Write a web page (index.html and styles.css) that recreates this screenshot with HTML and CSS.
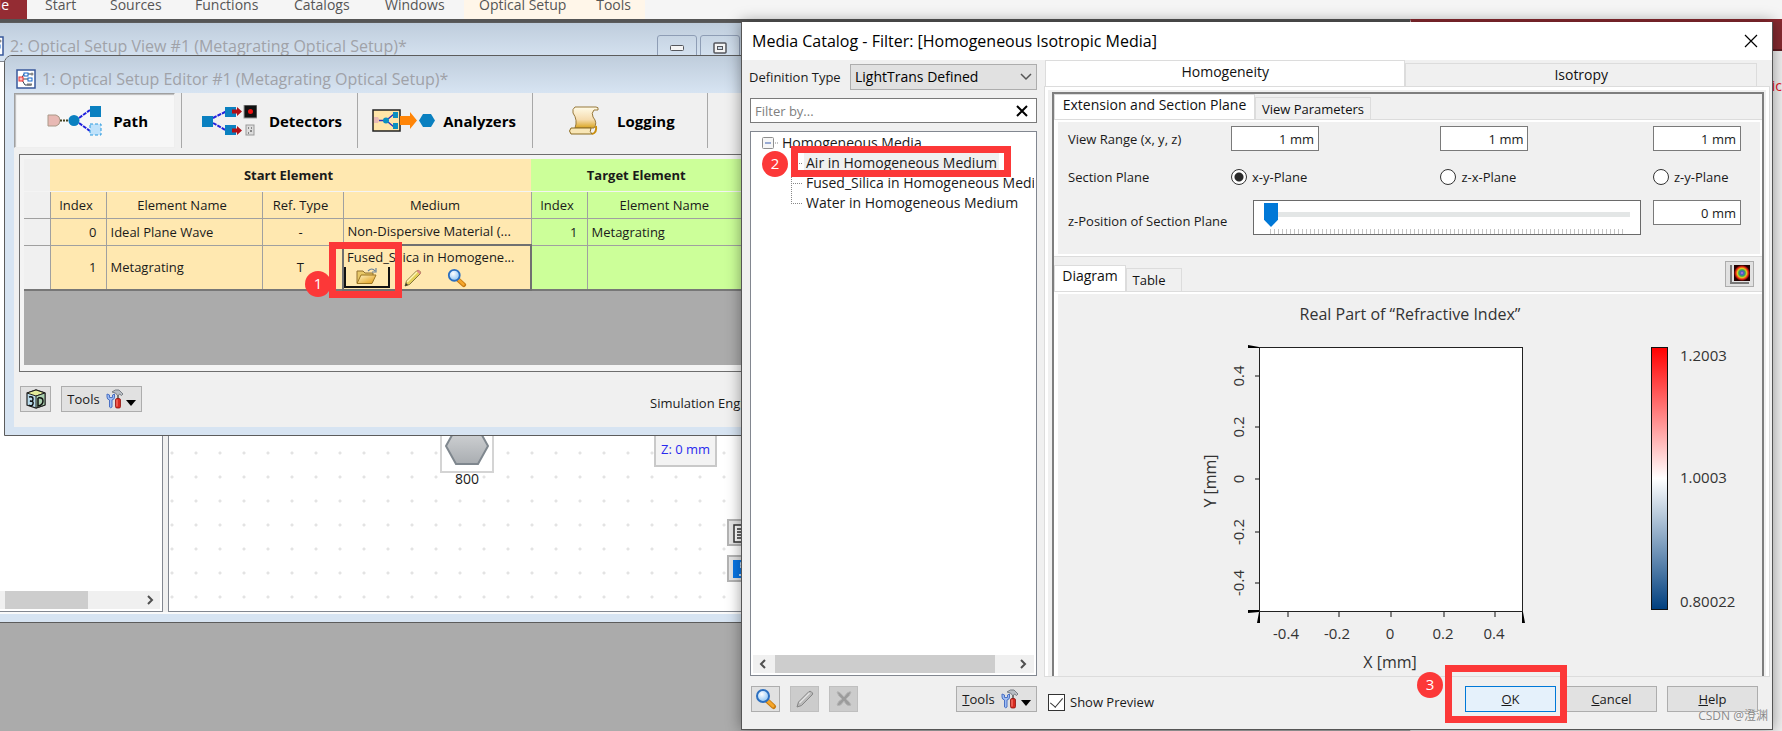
FILE: index.html
```
<!DOCTYPE html>
<html lang="en">
<head>
<meta charset="utf-8">
<title>Media Catalog</title>
<link rel="stylesheet" href="styles.css">
</head>
<body>
<svg class="defs" aria-hidden="true">
  <defs>
    <linearGradient id="gold" x1="0" y1="0" x2="1" y2="1"><stop offset="0" stop-color="#fff3c4"/><stop offset="1" stop-color="#e09a10"/></linearGradient>
    <linearGradient id="paper" x1="0" y1="0" x2="0" y2="1"><stop offset="0" stop-color="#fffbe8"/><stop offset=".6" stop-color="#f6dcae"/><stop offset="1" stop-color="#d9a520"/></linearGradient>
    <linearGradient id="steel" x1="0" y1="0" x2="0" y2="1"><stop offset="0" stop-color="#d4d6d8"/><stop offset="1" stop-color="#a9adb1"/></linearGradient>
    <linearGradient id="scale" x1="0" y1="0" x2="0" y2="1"><stop offset="0" stop-color="#f00"/><stop offset=".5" stop-color="#fff"/><stop offset="1" stop-color="#003f7f"/></linearGradient>
    <radialGradient id="lens" cx=".4" cy=".35"><stop offset="0" stop-color="#fff"/><stop offset="1" stop-color="#a6d2f7"/></radialGradient>
    <radialGradient id="spot"><stop offset="0" stop-color="#c9c"/><stop offset=".2" stop-color="#55c"/><stop offset=".4" stop-color="#3a5"/><stop offset=".58" stop-color="#dc2"/><stop offset=".78" stop-color="#e21"/><stop offset="1" stop-color="#200"/></radialGradient>
    <symbol id="i-magnify" viewBox="0 0 22 22"><path d="M12.5 13 18.500 18.500" stroke="#c77a10" stroke-width="5" stroke-linecap="round"/><path d="M13 13.200 18 18" stroke="#f5a62a" stroke-width="3" stroke-linecap="round"/><circle cx="8" cy="8" r="6" fill="url(#lens)" stroke="#2b6fc0" stroke-width="2"/></symbol>
    <symbol id="i-tools" viewBox="0 0 18 20"><path d="M1 5v3q0 2.500 2.500 3v7q1 1.500 2.500 0v-7Q8.500 10.500 8.500 8V5L6.500 6v2.500h-3V6Z" fill="#9dbcf2" stroke="#4a70c4"/><path d="M6 3q3-3 7-2l4 4-1.500 1.500L13.500 5 12 7 9.500 4Z" fill="#b9bec4" stroke="#666c74" stroke-width=".8"/><path d="M11 6h2v5h-2Z" fill="#777"/><rect x="9.500" y="9.500" width="5" height="9.500" rx="1.500" fill="#d92a20" stroke="#8d120c" stroke-width=".8"/><path d="M11 10.500v7" stroke="#ff8d80"/></symbol>
    <symbol id="i-pencil" viewBox="0 0 18 18"><path d="M1 17 2.500 12 13 1.500q2-1 3.500 1.500Q17 4 16 5L5.500 15.500Z" fill="#e3cf5a" stroke="#776a30" stroke-width=".9"/><path d="m3 13 10-10" stroke="#fff6b5" stroke-width="1.500"/><path d="m12.500 2 3.500 3.500 1-1.500Q16 1 14 1Z" fill="#d88"/><path d="m1 17 1-3 2 2Z" fill="#333"/></symbol>
    <symbol id="i-pencil-off" viewBox="0 0 18 18"><path d="M1 17 2.500 12 13 1.500q2-1 3.500 1.500Q17 4 16 5L5.500 15.500Z" fill="#b9b9b9" stroke="#858585"/><path d="m3.500 13 10-10" stroke="#e2e2e2" stroke-width="1.500"/></symbol>
    <symbol id="i-editor" viewBox="0 0 20 20"><rect x="1" y="1" width="18" height="18" fill="#fff" stroke="#38589a" stroke-width="1.500"/><path d="M5 10 8 5h8M6 10h8M6 11l3 5h6" fill="none" stroke="#345"/><rect x="3" y="8" width="4" height="4" fill="#fbb" stroke="#e33"/><rect x="8" y="4" width="4" height="3" fill="#fff" stroke="#16c"/><rect x="12" y="9" width="4" height="3" fill="#fff" stroke="#16c"/><circle cx="16" cy="5" r="1.500" fill="#888"/><path d="M11 14.500h5v2h-5Z" fill="#777"/></symbol>
  </defs>
</svg>

<nav class="menubar">
  <a class="file" href="#">File</a>
  <a href="#" class="m-start">Start</a>
  <a href="#" class="m-sources">Sources</a>
  <a href="#" class="m-functions">Functions</a>
  <a href="#" class="m-catalogs">Catalogs</a>
  <a href="#" class="m-windows">Windows</a>
  <div class="context"><a href="#">Optical Setup</a><a href="#">Tools</a></div>
</nav>

<div class="workspace">
  <div class="mdi"></div>
  <aside class="dock"><div class="dock-head"></div><span class="dock-text">ic</span></aside>

  <section class="window view-window">
    <header class="caption">
      <svg class="cap-icon" width="20" height="20"><use href="#i-editor"/></svg>
      <h2>2: Optical Setup View #1 (Metagrating Optical Setup)*</h2>
      <span class="cap-buttons">
        <button aria-label="Minimize"><svg width="14" height="8"><rect x=".5" y="1.500" width="13" height="5" rx="1" fill="#f4f4f4" stroke="#54565c"/></svg></button>
        <button aria-label="Restore"><svg width="14" height="12"><rect x="1" y="1" width="12" height="10" rx="1" fill="#f4f4f4" stroke="#54565c" stroke-width="1.500"/><rect x="4.500" y="4.500" width="5" height="3" fill="#cfdbe8" stroke="#54565c"/></svg></button>
      </span>
    </header>
    <div class="view-body">
      <div class="side-panel"><div class="scrollbar"><span class="side-thumb"></span><svg width="8" height="10"><path d="m2 1 4 4-4 4" fill="none" stroke="#505050" stroke-width="2"/></svg></div></div>
      <div class="canvas">
        <div class="node"><div class="node-box"><svg width="44" height="40"><path d="M11 2h22l10 18-10 18H11L1 20Z" fill="url(#steel)" stroke="#7f878e" stroke-width="2"/></svg></div><span>800</span></div>
        <div class="z-box">Z: 0 mm</div>
        <button class="tool-a" aria-label="Details"><svg width="18" height="20"><path d="M1 1h15v17H1ZM4 5h9M4 8h9M4 11h9M4 14h9" fill="#fff" stroke="#333" stroke-width="1.500"/></svg></button>
        <button class="tool-b" aria-label="Info"><svg width="18" height="18"><path d="M0 0h18v18H0Z" fill="#0a78e8"/><path d="M7 7h3v8M6 15h6M8 3h2v2H8Z" fill="none" stroke="#fff" stroke-width="1.500"/></svg></button>
      </div>
    </div>
  </section>

  <section class="window editor-window">
    <header class="caption">
      <svg class="cap-icon" width="20" height="20"><use href="#i-editor"/></svg>
      <h2>1: Optical Setup Editor #1 (Metagrating Optical Setup)*</h2>
    </header>
    <div class="editor-body">
      <div class="modes">
        <button class="mode active"><svg width="56" height="32" viewBox="0 0 56 32"><path d="M1 10h8q4 1 4 5.500T9 21H1Z" fill="#e8b9b4" stroke="#a98"/><path d="M13 15.500h8" stroke="#442" stroke-width="2" stroke-dasharray="2 1"/><path d="m32 13 11-8M32 18l11 8" stroke="#22d" stroke-width="2" stroke-dasharray="4 1"/><circle cx="27" cy="15.500" r="5.500" fill="#0a80c0"/><rect x="43" y="1" width="11" height="11" fill="#0a80c0"/><rect x="43" y="19" width="11" height="11" fill="#bfe2fb" stroke="#2a9ade" stroke-dasharray="3 2"/></svg><span>Path</span></button>
        <button class="mode"><svg width="56" height="32" viewBox="0 0 56 32"><path d="m12 13 14-7M12 18l14 8" stroke="#22d" stroke-width="2" stroke-dasharray="4 1"/><rect x="1" y="11" width="11" height="11" fill="#0a80c0"/><rect x="24" y="2" width="11" height="10" fill="#0a80c0"/><rect x="24" y="20" width="11" height="10" fill="#0a80c0"/><path d="M31 4.500h5V2l5 4.500-5 4.500V8.500h-5ZM31 23.500h5V21l5 4.500-5 4.500v-2.500h-5Z" fill="#b01018"/><rect x="43" y="0" width="13" height="13" fill="#111" stroke="#999"/><circle cx="49.500" cy="6.500" r="2.500" fill="#e11"/><rect x="45" y="20" width="8" height="10" fill="#ddd" stroke="#999"/><path d="M47 23h1M50 23h1M49 26h2M47 28h1" stroke="#333"/></svg><span>Detectors</span></button>
        <button class="mode"><svg width="63" height="32" viewBox="0 0 63 32"><rect x="1" y="5" width="27" height="21" fill="#ffe5a8" stroke="#222" stroke-width="1.500"/><path d="M2 12h4q2 3 0 6H2Z" fill="#e8b9b4"/><path d="M7 15.500h5M16 14l6-5M16 17l6 5" stroke="#33b" stroke-width="1.500"/><circle cx="14" cy="15.500" r="3" fill="#0a90c0"/><rect x="21" y="7" width="5" height="6" fill="#0a90c0"/><rect x="21" y="18" width="5" height="6" fill="#0a90c0"/><path d="M28 11h10V7l7 8.500-7 8.500v-4H28Z" fill="#ff8508"/><path d="M51 9h8l4 6.500-4 6.500h-8l-4-6.500Z" fill="#0a80c0"/></svg><span>Analyzers</span></button>
        <button class="mode"><svg width="32" height="32" viewBox="0 0 32 32"><path d="M7 2q-3 2-2 6 5 7 2 15h19q4-5-1-11-2-4 1-7h4q1-3-2-3Z" fill="url(#paper)" stroke="#97783a"/><path d="M3 23h20q-2 4 1 6H3q-3-3 0-6Z" fill="#f8e6b6" stroke="#8a6a20"/><path d="M24 29q5-1 4-8" fill="none" stroke="#c98d0b" stroke-width="2"/></svg><span>Logging</span></button>
      </div>
      <div class="grid-frame">
        <div class="grid-area">
        <table class="elements">
          <colgroup><col class="c-head"><col class="c-index"><col class="c-name"><col class="c-type"><col class="c-medium"><col class="c-index"><col></colgroup>
          <thead>
            <tr class="group"><th class="head"></th><th colspan="4">Start Element</th><th colspan="2" class="green">Target Element</th></tr>
            <tr><th class="head"></th><th>Index</th><th>Element Name</th><th>Ref. Type</th><th>Medium</th><th class="green">Index</th><th class="green">Element Name</th></tr>
          </thead>
          <tbody>
            <tr><td class="head"></td><td class="num">0</td><td>Ideal Plane Wave</td><td class="mid">-</td><td>Non-Dispersive Material (...</td><td class="green num">1</td><td class="green">Metagrating</td></tr>
            <tr class="tall"><td class="head"></td><td class="num">1</td><td>Metagrating</td><td class="mid">T</td>
              <td class="picked"><div class="medium"><span>Fused_Silica in Homogene...</span><div class="medium-tools">
                <button class="folder" aria-label="Load"><svg width="22" height="18" viewBox="0 0 22 18"><path d="M1 16V4h6l2 2h8v3" fill="#e8c868" stroke="#927030"/><path d="M1 16.500 5 8h15l-4 8.500Z" fill="url(#gold)" stroke="#9b7420"/><path d="M12 4q4-4 7 0M20 1v4h-4" fill="none" stroke="#68819c" stroke-width="1.200"/></svg></button>
                <button aria-label="Edit"><svg width="18" height="18"><use href="#i-pencil"/></svg></button>
                <button aria-label="View"><svg width="22" height="20"><use href="#i-magnify"/></svg></button>
              </div></div></td>
              <td class="green"></td><td class="green"></td></tr>
          </tbody>
        </table>
        </div>
      </div>
      <div class="editor-foot">
        <button class="btn cube" aria-label="3D view"><svg width="22" height="20" viewBox="0 0 22 20"><path d="m2 4 9-3 9 3v12l-9 3-9-3Z" fill="#b9dcec" stroke="#222" stroke-width="1.200"/><path d="m2 4 9-3 9 3-9 3Z" fill="#e4ec9a" stroke="#222"/><path d="m11 7 9-3v12l-9 3Z" fill="#a8cfae" stroke="#222"/><path d="M4 8q4-1 4 2t-3 2q4 0 3 3t-4 1M13 9v8q5-1 5-5t-5-3" fill="none" stroke="#111" stroke-width="1.500"/></svg></button>
        <button class="btn tools"><span>Tools</span><svg width="18" height="20"><use href="#i-tools"/></svg><svg class="caret" width="10" height="6"><path d="M0 0h10L5 6Z"/></svg></button>
        <span class="engine">Simulation Engine</span>
      </div>
    </div>
  </section>

  <section class="dialog" role="dialog" aria-labelledby="dlg-title">
    <header class="dialog-head">
      <h1 id="dlg-title">Media Catalog - Filter: [Homogeneous Isotropic Media]</h1>
      <button aria-label="Close"><svg width="14" height="14"><path d="m1 1 12 12M13 1 1 13" stroke="#000" stroke-width="1.200"/></svg></button>
    </header>
    <div class="dialog-body">
      <div class="catalog">
        <div class="def-row"><label for="deftype">Definition Type</label>
          <div class="select"><select id="deftype"><option>LightTrans Defined</option></select><svg width="12" height="8"><path d="m1 1 5 5 5-5" fill="none" stroke="#555" stroke-width="1.500"/></svg></div>
        </div>
        <div class="filter"><input type="text" placeholder="Filter by..." aria-label="Filter by"><button aria-label="Clear"><svg width="12" height="12"><path d="m1 1 10 10M11 1 1 11" stroke="#000" stroke-width="2"/></svg></button></div>
        <div class="tree">
          <ul class="tree-root">
            <li><div class="tree-item"><svg width="18" height="12"><rect x=".5" y=".5" width="11" height="11" rx="1" fill="#f6f6f6" stroke="#8e8e8e"/><path d="M3 6h6" stroke="#3a5fb0"/><path d="M13 6h4" stroke="#888" stroke-dasharray="1 1"/></svg><span>Homogeneous Media</span></div>
              <ul class="tree-leaves">
                <li><span class="leaf current">Air in Homogeneous Medium</span></li>
                <li><span class="leaf">Fused_Silica in Homogeneous Medium</span></li>
                <li><span class="leaf">Water in Homogeneous Medium</span></li>
              </ul></li>
          </ul>
          <div class="scrollbar"><svg width="22" height="10"><path d="m12 1-4 4 4 4" fill="none" stroke="#505050" stroke-width="2"/></svg><span class="tree-thumb"></span><svg width="22" height="10"><path d="m9 1 4 4-4 4" fill="none" stroke="#505050" stroke-width="2"/></svg></div>
        </div>
      </div>

      <div class="preview">
        <div class="tabs main-tabs"><button class="tab active">Homogeneity</button><button class="tab">Isotropy</button></div>
        <div class="page">
          <div class="frame">
            <div class="tabs"><button class="tab active t-ext">Extension and Section Plane</button><button class="tab t-view">View Parameters</button></div>
            <div class="pane params">
              <div class="param-grid">
                <span>View Range (x, y, z)</span>
                <input type="text" value="1 mm" aria-label="x range"><input type="text" value="1 mm" aria-label="y range"><input type="text" value="1 mm" aria-label="z range">
                <span>Section Plane</span>
                <label><input type="radio" name="plane" checked>x-y-Plane</label>
                <label><input type="radio" name="plane">z-x-Plane</label>
                <label><input type="radio" name="plane">z-y-Plane</label>
              </div>
              <div class="slide-row"><label for="zpos">z-Position of Section Plane</label>
                <div class="slider"><input id="zpos" type="range" min="0" max="100" value="0"><div class="ticks"></div></div>
                <input type="text" value="0 mm" aria-label="z position"></div>
            </div>
            <div class="tabs lower-tabs"><button class="tab active t-diag">Diagram</button><button class="tab t-table">Table</button>
              <button class="btn palette" aria-label="Color view"><svg width="22" height="20"><path d="M2 1v18h18" fill="none" stroke="#777" stroke-width="2"/><rect x="5" y="1" width="16" height="16" fill="#200"/><rect x="5" y="1" width="16" height="16" fill="url(#spot)"/></svg></button></div>
            <div class="pane chart">
              <svg width="560" height="380" role="img" aria-label="Real Part of Refractive Index">
                <text x="220" y="26" text-anchor="middle" class="chart-title">Real Part of “Refractive Index”</text>
                <rect x="69.500" y="53.500" width="263" height="264" fill="#fff" stroke="#222"/>
                <path d="M65 82h4M65 133h4M65 185h4M65 238h4M65 289h4M98 318v5M149 318v5M201 318v5M254 318v5M305 318v5" stroke="#111" fill="none"/>
                <path d="M58 51 69 53v1H58ZM58 319 69 318v-2L58 316ZM67 329 69 318h1v11ZM332 318h1l2 11h-3Z"/>
                <g class="chart-text" text-anchor="middle">
                  <text x="96" y="345">-0.4</text><text x="147" y="345">-0.2</text><text x="200" y="345">0</text><text x="253" y="345">0.2</text><text x="304" y="345">0.4</text>
                  <text x="200" y="374" class="chart-title">X [mm]</text>
                  <text transform="translate(54 82) rotate(-90)">0.4</text><text transform="translate(54 133) rotate(-90)">0.2</text><text transform="translate(54 185) rotate(-90)">0</text><text transform="translate(54 238) rotate(-90)">-0.2</text><text transform="translate(54 289) rotate(-90)">-0.4</text>
                  <text transform="translate(26 187) rotate(-90)" class="chart-title">Y [mm]</text>
                </g>
                <rect x="461.500" y="53.500" width="16" height="262" fill="url(#scale)" stroke="#111"/>
                <g class="chart-text"><text x="490" y="67">1.2003</text><text x="490" y="189">1.0003</text><text x="490" y="313">0.80022</text></g>
              </svg>
            </div>
          </div>
        </div>
      </div>
    </div>
    <footer class="dialog-foot">
      <div class="foot-left">
        <button class="btn icon" aria-label="Inspect"><svg width="22" height="22"><use href="#i-magnify"/></svg></button>
        <button class="btn icon off" disabled aria-label="Edit"><svg width="18" height="18"><use href="#i-pencil-off"/></svg></button>
        <button class="btn icon off" disabled aria-label="Delete"><svg width="18" height="18"><path d="M2 2q2-1 7 5 4-6 7-5-1 4-5 7 4 3 5 6-4 2-7-4-4 6-7 4 1-4 5-6-4-3-5-7Z" fill="#9c9c9c" stroke="#b4b4b4"/></svg></button>
        <button class="btn tools end"><span><u>T</u>ools</span><svg width="18" height="20"><use href="#i-tools"/></svg><svg class="caret" width="10" height="6"><path d="M0 0h10L5 6Z"/></svg></button>
      </div>
      <label class="show"><input type="checkbox" checked>Show Preview</label>
      <div class="actions"><button class="btn ok"><u>O</u>K</button><button class="btn"><u>C</u>ancel</button><button class="btn"><u>H</u>elp</button></div>
    </footer>
  </section>
</div>

<div class="mark box-1"></div><div class="badge badge-1">1</div>
<div class="mark box-2"></div><div class="badge badge-2">2</div>
<div class="mark box-3"></div><div class="badge badge-3">3</div>
<div class="watermark">CSDN @澄渊</div>
</body>
</html>
```
FILE: styles.css
```
* { box-sizing: border-box; }
body { margin: 0; height: 100vh; display: flex; flex-direction: column; overflow: hidden; position: relative; font: 13px/18px "Open Sans", "Noto Sans", "Noto Sans CJK SC", sans-serif; color: #1a1a1a; background: #ababab; }
button, input, select { font: inherit; color: inherit; }
button { border: 0; padding: 0; background: none; }
svg { flex: none; display: block; }
h1, h2, ul { margin: 0; padding: 0; font-weight: 400; list-style: none; }
.defs { position: absolute; width: 0; height: 0; }

/* menu */
.menubar { height: 19px; flex: none; display: flex; background: #f5f5f5; overflow: hidden; font-size: 14px; line-height: 10px; }
.menubar a { color: #555; text-decoration: none; white-space: nowrap; }
.menubar .file { width: 27px; height: 19px; background: #942c33; color: #fff; display: flex; justify-content: flex-end; padding-right: 18px; }
.m-start { margin-left: 18px; width: 65px; }
.m-sources { width: 85px; }
.m-functions { width: 99px; }
.m-catalogs { width: 91px; }
.m-windows { width: 79px; }
.context { background: #fff6e9; width: 181px; display: flex; justify-content: space-between; padding: 0 14px 0 15px; }

.workspace { flex: 1; position: relative; display: flex; border-top: 3px solid #555; min-height: 0; }
.mdi { flex: 1; background: #ababab; }
.dock { width: 372px; background: #f0f0f0; border-left: 1px solid #ddd; margin-top: -3px; border-top: 3px solid #8b2930; text-align: right; }
.dock-head { height: 29px; background: #852a30; border-bottom: 2px solid #5d1b20; }
.dock-text { display: block; color: #e81123; padding-top: 26px; font-size: 14px; }

/* MDI windows */
.window { position: absolute; background: #d7e4f2; border: 1px solid #5c5c5c; display: flex; flex-direction: column; }
.caption { height: 38px; flex: none; display: flex; align-items: center; gap: 6px; background: linear-gradient(#bfcddc, #d7e4f2); }
.caption h2 { font-size: 16px; line-height: 20px; color: #a0a2a8; white-space: nowrap; }
.view-window { left: -18px; top: 0; width: 790px; height: 601px; }
.view-window .caption { padding: 8px 31px 0 1px; }
.cap-buttons { margin-left: auto; display: flex; gap: 3px; align-self: flex-end; }
.cap-buttons button { width: 40px; height: 26px; border: 1px solid #8e9db5; border-radius: 3px; display: flex; align-items: center; justify-content: center; }
.view-body { flex: 1; display: flex; gap: 5px; background: #f0f0f0; margin: 0 0 8px; border-bottom: 2px solid #fafafa; min-height: 0; }
.side-panel { width: 180px; background: #fff; border: 1px solid #828790; display: flex; flex-direction: column; justify-content: flex-end; padding: 2px; }
.scrollbar { height: 18px; flex: none; background: #f0f0f0; display: flex; align-items: center; }
.side-thumb { width: 83px; height: 18px; background: #cdcdcd; margin: 0 auto 0 19px; }
.side-panel .scrollbar { padding-right: 6px; }
.canvas { flex: 1; position: relative; background: #fff radial-gradient(circle at 3px 3px, #e3e3e3 1px, transparent 2px) 0 4px / 24px 24px; border: 1px solid #828790; }
.node { position: absolute; left: 271px; top: 345px; width: 54px; text-align: center; font-size: 14px; line-height: 12px; }
.node-box { height: 66px; border: 2px solid #d4d4d4; background: #fff; display: flex; justify-content: center; align-items: flex-end; padding-bottom: 5px; }
.z-box { position: absolute; left: 485px; top: 370px; width: 63px; height: 35px; background: #f3f3f3; border: 2px solid #c9c9c9; color: #2a2aee; line-height: 30px; text-align: center; }
.tool-a, .tool-b { position: absolute; left: 558px; width: 28px; height: 27px; padding: 3px 4px; border: 2px solid #b4b4b4; background: #e6e6e6; }
.tool-a { top: 457px; }
.tool-b { top: 493px; }

.editor-window { left: 4px; top: 33px; width: 760px; height: 381px; border-radius: 8px 0 0 0; overflow: hidden; }
.editor-window .caption { padding: 8px 0 0 11px; height: 37px; }
.editor-body { flex: 1; margin: 0 0 8px 9px; background: #f0f0f0; display: flex; flex-direction: column; }
.modes { display: flex; height: 56px; }
.mode { width: 175px; flex: none; margin-bottom: 1px; border-right: 1px solid #a8a8a8; display: flex; align-items: center; justify-content: space-between; padding: 0 15px 0 19px; font-size: 15px; font-weight: 700; color: #000; }
.mode.active { width: 161px; margin-right: 6px; border: 1px solid #a0a0a0; border-right-color: #eee; border-bottom-color: #eee; box-shadow: inset 1px 1px 1px #bbb; background: #f7f7f7; padding: 0 26px 0 32px; }
.mode.active + .mode { width: 177px; border-left: 1px solid #a8a8a8; }
.mode:nth-child(3) { padding: 0 16px 0 14px; }
.mode:nth-child(4) { padding: 0 22px 0 35px; }
.mode:nth-child(4) span { width: 68px; text-align: left; }
.grid-frame { margin: 5px 0 0 5px; padding: 4px 0 4px 4px; border: 1px solid #6e6e6e; height: 218px; background: #f4f4f4; }
.grid-area { height: 206px; background: #ababab; }
.elements { width: 722px; table-layout: fixed; border-collapse: collapse; line-height: 18px; border-bottom: 2px solid #777; }
.c-head { width: 26px; } .c-index { width: 56px; } .c-name { width: 156px; } .c-type { width: 81px; } .c-medium { width: 188px; }
.elements th, .elements td { height: 27px; padding: 0 4px; background: #ffe8b0; border: 1px solid #a0a0a0; font-weight: 400; white-space: nowrap; overflow: hidden; }
.elements thead th { padding: 0 8px 0 4px; }
.elements .group th { height: 32px; font-weight: 700; border: 0; border-bottom: 1px solid #f4f4f4; }
.elements thead tr:nth-child(2) th { border-top: 1px solid #f4f4f4; }
.elements .green, .elements .group .green { background: #ccff99; }
.elements .head { background: #f0f0f0; border-left: 0; }
.elements .num { text-align: right; padding-right: 9px; }
.elements .mid { text-align: center; padding-right: 8px; }
.elements .tall td { height: 45px; }
.elements td.picked { padding: 0; border: 2px solid #707070; }
.medium { height: 42px; display: flex; flex-direction: column; }
.medium > span { padding-left: 3px; line-height: 20px; }
.medium-tools { display: flex; gap: 14px; flex: 1; align-items: center; }
.medium-tools .folder { width: 46px; height: 21px; border: 2px solid #111; border-top: 0; display: flex; justify-content: center; }
.medium-tools button:last-child { margin-left: 10px; }
.btn { border: 1px solid #adadad; background: #e1e1e1; display: flex; align-items: center; justify-content: center; height: 26px; }
.editor-foot { display: flex; align-items: center; padding: 14px 0 0 6px; gap: 10px; }
.cube { width: 31px; }
.tools { width: 81px; gap: 6px; }
.caret { margin: 8px 0 0 -4px; }
.engine { margin-left: auto; width: 113px; padding-top: 8px; white-space: nowrap; }

/* dialog */
.dialog { position: absolute; left: 741px; right: 9px; top: 0; bottom: 1px; background: #f0f0f0; border: 1px solid #555; border-top: 0; box-shadow: 0 0 14px rgba(0, 0, 0, .4); display: flex; flex-direction: column; }
.dialog-head { height: 38px; flex: none; background: #fff; display: flex; align-items: center; justify-content: space-between; padding: 0 14px 0 10px; color: #000; }
.dialog-head h1 { font-size: 16px; line-height: 20px; }
.dialog-body { flex: 1; display: flex; gap: 8px; padding: 0 3px 0 8px; min-height: 0; }
.catalog { width: 287px; flex: none; display: flex; flex-direction: column; gap: 8px; padding-top: 4px; }
.def-row { display: flex; align-items: center; justify-content: space-between; margin-left: -1px; white-space: nowrap; }
.select { width: 187px; position: relative; }
.select select { appearance: none; display: block; width: 100%; height: 26px; border: 1px solid #adadad; border-radius: 0; background: #e1e1e1; padding: 0 4px; color: #000; font-size: 14px; }
.select svg { position: absolute; right: 5px; top: 9px; }
.filter { height: 25px; background: #fff; border: 1px solid #7a7a7a; display: flex; align-items: center; padding: 0 8px 0 4px; }
.filter input { flex: 1; min-width: 0; border: 0; padding: 0; outline: 0; background: none; }
.filter input::placeholder { color: #808080; }
.tree { flex: 1; background: #fff; border: 1px solid #828790; display: flex; flex-direction: column; justify-content: space-between; padding: 1px 2px 2px; min-height: 0; }
.tree-root { overflow: hidden; white-space: nowrap; font-size: 14px; line-height: 20px; }
.tree-item { display: flex; align-items: center; gap: 2px; padding-left: 9px; }
.tree-leaves { padding-left: 38px; background: repeating-linear-gradient(#888 0 1px, transparent 1px 2px) 38px 0 / 1px 50px no-repeat; }
.tree-leaves li { display: flex; align-items: center; height: 20px; }
.tree-leaves li::before { content: ""; width: 11px; flex: none; border-top: 1px dotted #888; margin-right: 2px; }
.leaf { padding: 0 2px; }
.leaf.current { background: #f0f0f0; }
.tree-thumb { flex: 1; height: 18px; background: #cdcdcd; margin-right: 17px; }
.preview { flex: 1; min-width: 0; display: flex; flex-direction: column; }
.tabs { display: flex; align-items: flex-end; }
.tab { background: #f0f0f0; border: 1px solid #dcdcdc; border-bottom: 0; height: 23px; padding: 0; color: #111; white-space: nowrap; }
.tab.active { background: #fff; height: 26px; font-size: 14px; padding-bottom: 5px; }
.main-tabs { padding-right: 12px; }
.main-tabs .tab { flex: 352; height: 24px; font-size: 14px; padding-bottom: 2px; }
.main-tabs .tab.active { flex: 361; height: 27px; padding-bottom: 4px; }
.page { flex: 1; display: flex; border: 3px solid #fff; outline: 1px solid #dcdcdc; border-bottom: 0; padding: 2px 2px 0 4px; min-height: 0; }
.frame { flex: 1; min-width: 0; display: flex; flex-direction: column; border: 2px solid #7e7e7e; border-bottom: 0; }
.t-ext { width: 201px; } .t-view { width: 116px; } .t-diag { width: 72px; } .t-table { width: 56px; }
.frame .t-table { padding-right: 10px; }
.pane { border: 2px solid #fff; border-left-width: 4px; box-shadow: 0 -1px #dcdcdc, 0 1px #dcdcdc; }
.params { padding: 4px 19px 19px 10px; }
.param-grid { display: grid; grid-template-columns: 163px 209fr 212fr 88px; row-gap: 14px; align-items: center; }
.params input[type=text] { width: 88px; height: 25px; border: 1px solid #7a7a7a; border-radius: 0; padding: 0 4px; text-align: right; background: #fff; }
.param-grid label { display: flex; align-items: center; gap: 5px; white-space: nowrap; height: 24px; }
input[type=radio] { appearance: none; margin: 0; width: 16px; height: 16px; flex: none; border: 1px solid #333; border-radius: 50%; background: #fff; }
input[type=radio]:checked { background: radial-gradient(circle, #2a2a2a 4px, #fff 5px); }
.slide-row { display: flex; align-items: flex-start; margin-top: 11px; }
.slide-row label { width: 185px; flex: none; padding-top: 12px; white-space: nowrap; }
.slide-row > input { margin-left: 12px; }
.slider { flex: 1; height: 35px; background: #fff; border: 1px solid #6a6a6a; padding: 2px 10px 0; }
.slider input { appearance: none; display: block; width: 100%; height: 24px; margin: 0; background: linear-gradient(#e3e6e6, #e3e6e6) 0 9px / 100% 5px no-repeat; }
.slider input::-webkit-slider-thumb { appearance: none; width: 14px; height: 24px; background: #0078d7; clip-path: polygon(0 0, 100% 0, 100% 70%, 50% 100%, 0 70%); }
.ticks { height: 5px; margin: 2px 6px 0; background: repeating-linear-gradient(90deg, #c4c4c4 0 1px, transparent 1px 4px); }
.lower-tabs { height: 35px; padding-right: 8px; margin-bottom: 1px; }
.palette { width: 29px; margin: 0 0 4px auto; }
.chart { flex: 1; min-height: 0; border-right: 0; border-bottom: 0; box-shadow: 0 -1px #dcdcdc; display: flex; justify-content: flex-end; padding-right: 12px; overflow: hidden; }
.chart-text { font-size: 15px; fill: #333; }
.chart-title { font-size: 16px; fill: #333; }
.dialog-foot { height: 53px; flex: none; display: flex; align-items: flex-start; padding: 10px 14px 0 9px; }
.foot-left { width: 286px; display: flex; gap: 10px; }
.icon { width: 29px; }
.off { background: #ccc; border-color: #bfbfbf; }
.end { margin-left: auto; }
.show { display: flex; align-items: center; gap: 5px; margin: 7px 0 0 11px; }
input[type=checkbox] { appearance: none; width: 17px; height: 17px; margin: 0; border: 1px solid #333; background: #fff; display: grid; place-items: center; }
input[type=checkbox]:checked::before { content: ""; width: 6px; height: 11px; border: solid #333; border-width: 0 1px 1px 0; rotate: 40deg; margin-top: -3px; }
.actions { margin-left: auto; display: flex; gap: 10px; }
.actions .btn { width: 91px; display: block; }
.actions .ok { background: #e5f1fb; border: 1px solid #0078d7; }

/* step markers */
.mark { position: absolute; border: 7px solid #fc3838; pointer-events: none; }
.badge { position: absolute; width: 26px; height: 26px; border-radius: 50%; background: #fc3838; color: #fff; text-align: center; font-size: 15px; line-height: 25px; }
.box-1 { left: 329px; top: 242px; width: 73px; height: 56px; }
.box-2 { left: 791px; top: 146px; width: 220px; height: 31px; }
.box-3 { left: 1445px; top: 665px; width: 122px; height: 58px; }
.badge-1 { left: 305px; top: 271px; }
.badge-2 { left: 762px; top: 151px; }
.badge-3 { left: 1417px; top: 672px; }
.watermark { position: absolute; right: 14px; bottom: 6px; font-size: 12px; line-height: 18px; color: #888; text-shadow: 0 0 1px #fff; white-space: nowrap; }
```
